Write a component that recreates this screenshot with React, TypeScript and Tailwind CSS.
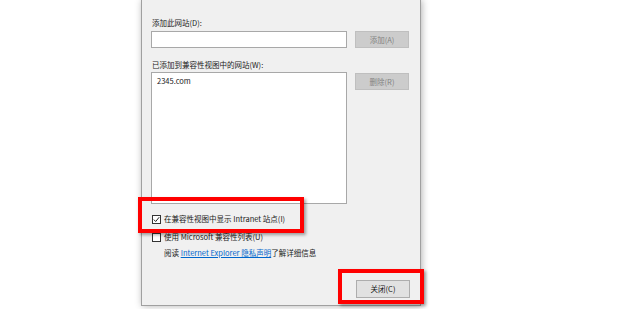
import React from "react";

const font = { fontFamily: '"Noto Sans CJK SC", "Noto Sans", sans-serif' };

const Checkbox = ({ checked }: { checked?: boolean }) => (
  <span className="flex h-[9px] w-[9px] items-center justify-center border border-[#333] bg-white">
    {checked && (
      <svg width="7" height="7" viewBox="0 0 7 7">
        <path d="M0.8 3.6 L2.7 5.5 L6.2 1.2" fill="none" stroke="#222" strokeWidth="1" />
      </svg>
    )}
  </span>
);

const WinButton = ({ label, disabled }: { label: string; disabled?: boolean }) => (
  <div
    className={
      disabled
        ? "flex h-[17px] w-[54px] items-center justify-center border border-[#bfbfbf] bg-[#cccccc] text-[#838383]"
        : "flex h-[18px] w-[54px] items-center justify-center border border-[#adadad] bg-[#e1e1e1] text-[#111]"
    }
  >
    {label}
  </div>
);

export default function App() {
  return (
    <div className="relative h-[309px] w-[620px] overflow-hidden bg-white text-[7.5px] leading-[10px] text-[#1a1a1a]" style={font}>
      <div className="ml-[141px] flex h-[306px] w-[280px] flex-col border-x border-b border-[#a0a0a0] bg-[#f0f0f0] pl-[9px] pr-[10px] shadow-[1px_0_7px_rgba(0,0,0,0.3)]">
        <div className="mt-[18px] h-[10px] pl-[1px]">添加此网站(D):</div>
        <div className="mt-[3px] flex gap-[8px]">
          <div className="h-[17px] w-[196px] border border-[#a8a8a8] bg-white" />
          <WinButton label="添加(A)" disabled />
        </div>
        <div className="mt-[12px] h-[10px] pl-[1px]">已添加到兼容性视图中的网站(W):</div>
        <div className="mt-[2px] flex gap-[8px]">
          <div className="h-[132px] w-[196px] border border-[#a8a8a8] bg-white px-[5px] pt-[3px]">2345.com</div>
          <div className="mt-[1px]">
            <WinButton label="删除(R)" disabled />
          </div>
        </div>
        <div className="mt-[10px] flex h-[10px] items-center gap-[3px] pl-[1px]">
          <Checkbox checked />
          <span>在兼容性视图中显示 Intranet 站点(I)</span>
        </div>
        <div className="mt-[8px] flex h-[10px] items-center gap-[3px] pl-[1px]">
          <Checkbox />
          <span>使用 Microsoft 兼容性列表(U)</span>
        </div>
        <div className="mt-[6px] flex h-[10px] items-center pl-[13px]">
          <span>阅读&nbsp;</span>
          <span className="text-[#0066cc] underline">Internet Explorer 隐私声明</span>
          <span>了解详细信息</span>
        </div>
        <div className="mt-[22px] flex justify-end">
          <WinButton label="关闭(C)" />
        </div>
      </div>

      <div className="absolute left-[138px] top-[197px] h-[36px] w-[166px] border-4 border-[#ff0000] shadow-[2px_2px_3px_rgba(0,0,0,0.35)]" />
      <div className="absolute left-[338px] top-[269px] h-[35px] w-[86px] border-4 border-[#ff0000] shadow-[2px_2px_3px_rgba(0,0,0,0.35)]" />
    </div>
  );
}
